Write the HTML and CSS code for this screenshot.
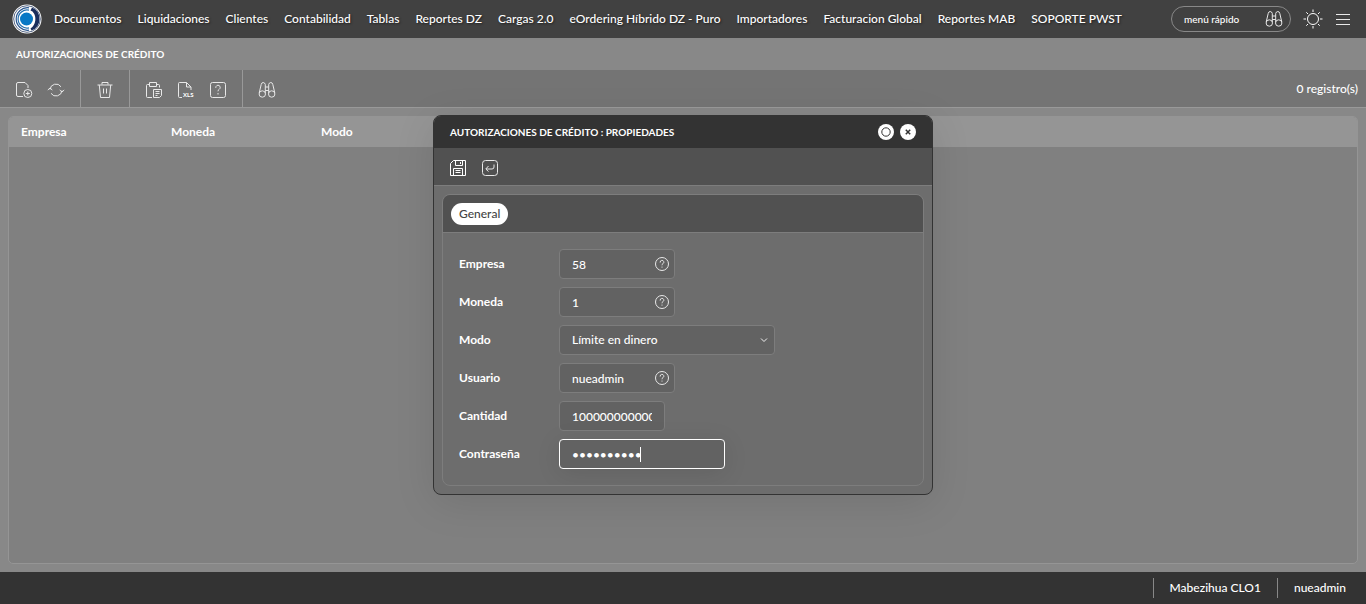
FILE: index.html
```
<!DOCTYPE html>
<html lang="es">
<head>
<meta charset="utf-8">
<meta name="viewport" content="width=device-width, initial-scale=1">
<title>Autorizaciones de crédito</title>
<link rel="stylesheet" href="styles.css">
</head>
<body>
<svg class="defs" aria-hidden="true">
  <symbol id="binoculars" viewBox="0 0 18 18">
    <circle cx="4.3" cy="13" r="3.2"/><circle cx="13.7" cy="13" r="3.2"/>
    <path d="M1.2 12 3.2 3.5Q3.6 1.5 5.2 1.5T7.3 3.5V12M16.8 12l-2-8.500q-.4-2-2-2T10.700 3.500V12M7.300 6h3.400M7.300 9.500h3.400"/>
  </symbol>
  <symbol id="help" viewBox="0 0 16 16">
    <circle cx="8" cy="8" r="6.500"/>
    <path d="M6.200 6.600V6.200a1.800 1.800 0 1 1 2.700 1.500Q8 8.200 8 9.300M8 10.600v1"/>
  </symbol>
</svg>

<header class="topbar">
  <svg class="logo" viewBox="0 0 30 30" aria-hidden="true">
    <circle cx="15" cy="15" r="14.500" fill="#fff"/>
    <circle cx="15" cy="15" r="13.300" fill="none" stroke="#5a6a88" stroke-width="1"/>
    <path d="M17 3.800a11.300 11.300 0 1 0 0 22.400" fill="none" stroke="#29558e" stroke-width="1.200"/>
    <path d="M17 6.200a9 9 0 1 0 0 17.600" fill="none" stroke="#2772b0" stroke-width="1.200"/>
    <path d="M20 3.500A12.500 12.500 0 0 1 19.500 26.600L18.500 24.500A11.500 11.500 0 0 0 20.500 7.500L18.500 6.500Z" fill="#182d5c"/>
    <circle cx="14.500" cy="15" r="6.500" fill="#0878c5"/>
  </svg>
  <nav class="menu">
    <a href="#">Documentos</a>
    <a href="#">Liquidaciones</a>
    <a href="#">Clientes</a>
    <a href="#">Contabilidad</a>
    <a href="#">Tablas</a>
    <a href="#">Reportes DZ</a>
    <a href="#">Cargas 2.0</a>
    <a href="#">eOrdering Híbrido DZ - Puro</a>
    <a href="#">Importadores</a>
    <a href="#">Facturacion Global</a>
    <a href="#">Reportes MAB</a>
    <a href="#">SOPORTE PWST</a>
  </nav>
  <div class="search">
    <input type="text" placeholder="menú rápido" aria-label="menú rápido">
    <button type="button" aria-label="Buscar menú"><svg class="icon"><use href="#binoculars"/></svg></button>
  </div>
  <button class="theme" type="button" aria-label="Tema">
    <svg class="icon icon-sun" viewBox="0 0 20 20"><circle cx="10" cy="10" r="5.500"/><path d="M10 .500v2.500M10 17v2.500M.500 10H3M17 10h2.500M3.300 3.300 5 5M15 15l1.700 1.700M3.300 16.700 5 15M15 5l1.700-1.700"/></svg>
  </button>
  <button class="burger" type="button" aria-label="Menú">
    <svg class="icon" viewBox="0 0 16 16"><path d="M1 3.500h14M1 8.500h14M1 13.500h14"/></svg>
  </button>
</header>

<main class="page">
  <h1 class="page-title">AUTORIZACIONES DE CRÉDITO</h1>
  <div class="toolbar">
    <div class="group">
      <button type="button" aria-label="Nuevo"><svg class="icon" viewBox="0 0 18 18"><path d="M8 15.500H3Q1.500 15.500 1.500 14V3Q1.500 1.500 3 1.500h7l3 3V7"/><circle cx="12.800" cy="12.500" r="4"/><path d="M12.800 10.500v4M10.800 12.500h4"/></svg></button>
      <button type="button" aria-label="Actualizar"><svg class="icon" viewBox="0 0 18 18"><path d="M3 8.500A6 6 0 0 1 14 5.800M15 9.500A6 6 0 0 1 4 12.300M.800 9 3 7l2.300 2M12.700 9 15 11l2.200-2"/></svg></button>
    </div>
    <div class="group">
      <button type="button" aria-label="Eliminar"><svg class="icon" viewBox="0 0 18 18"><path d="M1.500 4h15M6 3.500v-2h6v2M3.300 4l1.200 12.500h9L14.700 4M7.500 7.500v5M10.500 7.500v5"/></svg></button>
    </div>
    <div class="group">
      <button type="button" aria-label="Pegar"><svg class="icon" viewBox="0 0 18 18"><path d="M7 16.500H2.500Q1.500 16.500 1.500 15.500v-11q0-1 1-1H4.500M11.500 3.500h2q1 0 1 1v2M4.500 1.500h7v4h-7ZM8.500 8.500h8v6l-2 2h-6ZM10.500 10.500h4M10.500 12.500h4M10.500 14.500h2"/></svg></button>
      <button type="button" aria-label="Exportar XLS"><svg class="icon" viewBox="0 0 18 18"><path d="M5 16.500H2.500Q1.500 16.500 1.500 15.500v-13q0-1 1-1h7l4.500 4.500v3M9.500 1.500v4.500h4.500"/><text x="6" y="16">XLS</text></svg></button>
      <button type="button" aria-label="Ayuda"><svg class="icon" viewBox="0 0 18 18"><rect x="1.500" y="1.500" width="15" height="15" rx="2"/><path d="M6.800 7V6.500a2.200 2.200 0 1 1 3.400 1.800Q9 9 9 10.300M9 12v1.500"/></svg></button>
    </div>
    <div class="group">
      <button type="button" aria-label="Buscar"><svg class="icon"><use href="#binoculars"/></svg></button>
    </div>
    <output class="count">0 registro(s)</output>
  </div>
  <div class="content">
    <div class="grid">
      <table>
        <thead><tr><th scope="col">Empresa</th><th scope="col">Moneda</th><th scope="col">Modo</th><th aria-hidden="true"></th></tr></thead>
      </table>
    </div>
  </div>
</main>

<footer class="status">
  <span>Mabezihua CLO1</span>
  <span>nueadmin</span>
</footer>

<section class="dialog" role="dialog" aria-labelledby="dialog-title">
  <header class="dialog-head">
    <h2 id="dialog-title">AUTORIZACIONES DE CRÉDITO : PROPIEDADES</h2>
    <button type="button" aria-label="Maximizar"><svg viewBox="0 0 16 16"><circle cx="8" cy="8" r="4.200"/></svg></button>
    <button type="button" aria-label="Cerrar"><svg class="close" viewBox="0 0 16 16"><path d="m5.800 5.800 4.400 4.400M10.200 5.800l-4.400 4.400"/></svg></button>
  </header>
  <div class="dialog-tools">
    <button type="button" aria-label="Guardar"><svg class="icon bright" viewBox="0 0 18 18"><path d="M4.500 1.500h12v15h-15v-12ZM6.500 1.500v5h7v-5M11.500 3v2M4.500 16.500v-7h9v7M6.500 11.500h5M6.500 13.500h5"/></svg></button>
    <button type="button" aria-label="Volver"><svg class="icon" viewBox="0 0 18 18"><rect x="1.500" y="1.500" width="15" height="15" rx="3"/><path d="M13 5.500V8q0 2-2 2H5M7.500 7 4.800 10l2.700 2.500"/></svg></button>
  </div>
  <div class="dialog-body">
    <form class="panel">
      <div class="tabs"><button type="button">General</button></div>
      <div class="fields">
        <div class="row">
          <label for="empresa">Empresa</label>
          <div class="field short"><input id="empresa" type="text" value="58"><button type="button" aria-label="Buscar empresa"><svg class="icon"><use href="#help"/></svg></button></div>
        </div>
        <div class="row">
          <label for="moneda">Moneda</label>
          <div class="field short"><input id="moneda" type="text" value="1"><button type="button" aria-label="Buscar moneda"><svg class="icon"><use href="#help"/></svg></button></div>
        </div>
        <div class="row">
          <label for="modo">Modo</label>
          <div class="field wide"><select id="modo"><option>Límite en dinero</option></select><svg class="chevron" viewBox="0 0 8 8"><path d="m1 2.500 3 3 3-3"/></svg></div>
        </div>
        <div class="row">
          <label for="usuario">Usuario</label>
          <div class="field short"><input id="usuario" type="text" value="nueadmin"><button type="button" aria-label="Buscar usuario"><svg class="icon"><use href="#help"/></svg></button></div>
        </div>
        <div class="row">
          <label for="cantidad">Cantidad</label>
          <div class="field amount"><input id="cantidad" type="text" value="1000000000000"></div>
        </div>
        <div class="row">
          <label for="clave">Contraseña</label>
          <div class="field password"><input id="clave" type="password" value="contrasena"><span class="caret"></span></div>
        </div>
      </div>
    </form>
  </div>
</section>
</body>
</html>
```
FILE: styles.css
```
* { box-sizing: border-box; }

body {
  margin: 0;
  min-height: 100vh;
  display: flex;
  flex-direction: column;
  background: #888;
  color: #fff;
  font: 12px/16px Lato, sans-serif;
  font-weight: 500;
}

button, input, select { font: inherit; color: inherit; }

button {
  display: flex;
  align-items: center;
  justify-content: center;
  padding: 0;
  border: 0;
  background: none;
}

.defs { position: absolute; width: 0; height: 0; }

.icon {
  display: block;
  width: 18px;
  height: 18px;
  fill: none;
  stroke: #e8e8e8;
  stroke-width: 1;
}

.icon text {
  font: 700 6px Lato, sans-serif;
  fill: #fff;
  stroke: none;
}

.icon.bright { stroke: #fff; }

.topbar {
  display: flex;
  align-items: center;
  height: 38px;
  padding: 0 15px 0 12px;
  background: #414141;
}

.logo { width: 30px; height: 30px; flex: none; }

.menu {
  display: flex;
  gap: 16px;
  margin-left: 12px;
  white-space: nowrap;
  text-shadow: 1px 1px 2px #222;
}

.menu a { color: #fff; text-decoration: none; }

.search {
  display: flex;
  align-items: center;
  width: 120px;
  height: 26px;
  margin-left: auto;
  padding: 0 7px 0 12px;
  border: 1px solid #888;
  border-radius: 13px;
}

.search input {
  flex: 1;
  min-width: 0;
  padding: 0;
  border: 0;
  outline: 0;
  background: none;
  font-size: 10px;
}

.search input::placeholder { color: #fff; opacity: 1; }

.theme { margin-left: 12px; }
.burger { margin-left: 12px; }
.burger .icon { width: 16px; height: 16px; }
.icon-sun { width: 20px; height: 20px; stroke: #fff; }

.page { flex: 1; display: flex; flex-direction: column; }

.page-title {
  margin: 0;
  padding: 8px 16px;
  font-size: 10px;
  font-weight: 700;
}

.toolbar {
  display: flex;
  align-items: center;
  height: 38px;
  padding-right: 8px;
  border-bottom: 1px solid #999;
  background: #747474;
}

.group {
  display: flex;
  align-items: center;
  gap: 14px;
  height: 100%;
  padding: 2px 15px 0;
  border-right: 1px solid #999;
}

.group:last-of-type { border-right: 0; }
.count { margin-left: auto; }

.content { flex: 1; display: flex; padding: 8px; }

.grid {
  flex: 1;
  overflow: hidden;
  border: 1px solid #959595;
  border-radius: 5px;
  background: #808080;
}

table { width: 100%; border-collapse: collapse; table-layout: fixed; }

th {
  width: 150px;
  height: 30px;
  padding: 0 12px;
  background: #959595;
  font-size: 12px;
  text-align: left;
}

th:last-child { width: auto; }

.status {
  display: flex;
  align-items: center;
  justify-content: flex-end;
  height: 32px;
  padding-right: 4px;
  background: #333;
}

.status span { padding: 2px 16px; border-left: 1px solid #888; }

.dialog {
  position: absolute;
  top: 115px;
  left: 50%;
  width: 500px;
  transform: translateX(-50%);
  overflow: hidden;
  border: 1px solid #333;
  border-radius: 8px;
  background: #6d6d6d;
  box-shadow: 0 8px 40px rgba(0, 0, 0, .1);
}

.dialog-head {
  display: flex;
  align-items: center;
  gap: 6px;
  height: 32px;
  padding: 0 16px;
  background: #333;
}

.dialog-head h2 { flex: 1; margin: 0; font-size: 10px; font-weight: 700; }
.dialog-head button { width: 16px; height: 16px; border-radius: 8px; background: #fff; }
.dialog-head svg { width: 16px; height: 16px; fill: none; stroke: #333; }
.dialog-head .close { stroke-width: 1.5; }

.dialog-tools {
  display: flex;
  align-items: center;
  gap: 14px;
  height: 38px;
  padding: 2px 15px 0;
  border-bottom: 1px solid #7d7d7d;
  background: #515151;
}

.dialog-body { padding: 8px; }

.panel {
  overflow: hidden;
  border: 1px solid #7d7d7d;
  border-radius: 8px;
}

.tabs {
  display: flex;
  padding: 8px 8px 7px;
  border-bottom: 1px solid #7d7d7d;
  background: #515151;
}

.tabs button {
  height: 22px;
  padding: 0 8px;
  border-radius: 11px;
  background: #fff;
  color: #444;
}

.fields {
  display: flex;
  flex-direction: column;
  gap: 8px;
  padding: 16px;
}

.row { display: flex; align-items: center; }
.row label { width: 100px; font-size: 12px; font-weight: 700; }

.field {
  position: relative;
  display: flex;
  align-items: center;
  height: 30px;
  padding: 0 4px 0 12px;
  border: 1px solid #7d7d7d;
  border-radius: 4px;
  background: #626262;
}

.field input, .field select {
  flex: 1;
  min-width: 0;
  height: 28px;
  padding: 0;
  border: 0;
  outline: 0;
  background: none;
  font-size: 12px;
  appearance: none;
}

.field .icon { width: 16px; height: 16px; }
.short { width: 116px; }
.wide { width: 216px; padding-right: 6px; }
.amount { width: 106px; padding-right: 12px; }

.chevron { width: 8px; height: 8px; fill: none; stroke: #eee; }

.password {
  width: 166px;
  border-color: #fff;
  box-shadow: 0 4px 24px rgba(0, 0, 0, .1);
}

.caret {
  position: absolute;
  top: 7px;
  left: 80px;
  width: 1px;
  height: 15px;
  background: #fff;
}
```
